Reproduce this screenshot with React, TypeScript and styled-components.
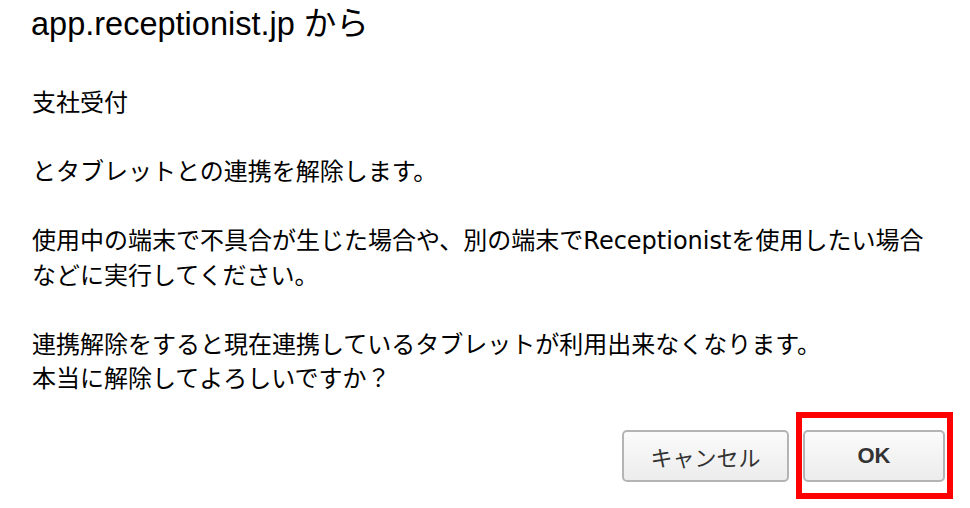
import React from "react";
import styled, { createGlobalStyle } from "styled-components";

const Global = createGlobalStyle`
  html, body {
    margin: 0;
    padding: 0;
    background: #ffffff;
  }
  body {
    font-family: "Liberation Sans", "Noto Sans CJK JP", sans-serif;
    color: #000;
  }
`;

const Dialog = styled.div`
  width: 970px;
  height: 508px;
  box-sizing: border-box;
  padding: 4px 25px 0 31px;
  display: flex;
  flex-direction: column;
  background: #fff;
`;

const Title = styled.h1`
  margin: 0;
  font-family: "Liberation Sans", "Noto Sans CJK JP", sans-serif;
  font-weight: 400;
  font-size: 32.5px;
  line-height: 40px;
  color: #000;
`;

const Message = styled.p`
  margin: 42px 0 0 1px;
  font-family: "DejaVu Sans", "Noto Sans CJK JP", sans-serif;
  font-size: 24px;
  line-height: 34.5px;
  white-space: pre-line;
  color: #000;
`;

const Actions = styled.div`
  margin-top: 33px;
  display: flex;
  justify-content: flex-end;
  gap: 14px;
`;

const Button = styled.button<{ $primary?: boolean; $width: number }>`
  position: relative;
  width: ${(p) => p.$width}px;
  height: 52px;
  box-sizing: border-box;
  border: 2px solid #b4b4b4;
  border-radius: 5px;
  background: linear-gradient(#fbfbfb, #ececec);
  font-family: "Liberation Sans", "Noto Sans CJK JP", sans-serif;
  font-size: 22px;
  font-weight: ${(p) => (p.$primary ? 700 : 400)};
  color: #333;
  padding: 0;
  display: flex;
  align-items: center;
  justify-content: center;
  cursor: default;
`;

const Highlight = styled.span`
  position: absolute;
  left: -9px;
  right: -10px;
  top: -20px;
  bottom: -19px;
  border: 6px solid #ff0000;
  pointer-events: none;
`;

const message = `支社受付

とタブレットとの連携を解除します。

使用中の端末で不具合が生じた場合や、別の端末でReceptionistを使用したい場合
などに実行してください。

連携解除をすると現在連携しているタブレットが利用出来なくなります。
本当に解除してよろしいですか？`;

export default function App() {
  return (
    <>
      <Global />
      <Dialog>
        <Title>app.receptionist.jp から</Title>
        <Message>{message}</Message>
        <Actions>
          <Button $width={167}>キャンセル</Button>
          <Button $primary $width={142}>
            OK
            <Highlight />
          </Button>
        </Actions>
      </Dialog>
    </>
  );
}
